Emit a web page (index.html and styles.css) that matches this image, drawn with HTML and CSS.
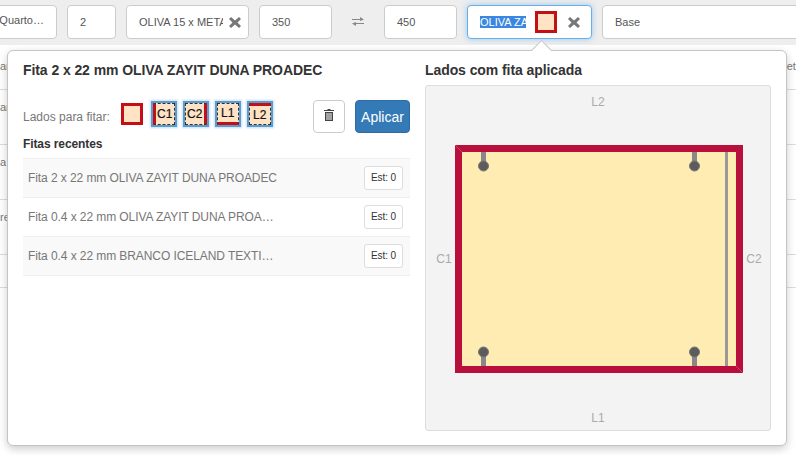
FILE: index.html
```html
<!DOCTYPE html>
<html lang="pt">
<head>
  <meta charset="UTF-8" />
  <meta name="viewport" content="width=device-width, initial-scale=1.0" />
  <title>Fitas</title>
  <link rel="stylesheet" href="styles.css">
</head>
<body>
  <div class="toolbar">
    <div class="field f-name"><span class="clip">Quarto…</span></div>
    <div class="field f-qty"><span>2</span></div>
    <div class="field f-mat">
      <span class="clip">OLIVA 15 x METAL</span>
      <svg class="remove" width="12" height="11" viewBox="0 0 12 11"><path d="M2 0l4 3.500L10 0l2 2-3.500 3.500L12 9l-2 2-4-3.500L2 11 0 9l3.500-3.500L0 2z"/></svg>
    </div>
    <div class="field f-num"><span>350</span></div>
    <div class="swap">
      <svg width="12" height="9" viewBox="0 0 12 9"><path d="M8 0l4 2.500L8 4V3H0V2h8zM4 5v1h8v1H4v2L0 6.500z" fill="#888"/></svg>
    </div>
    <div class="field f-num"><span>450</span></div>
    <div class="field f-tape active">
      <span class="clip"><span class="selected">OLIVA ZAYIT</span></span>
      <span class="swatch"></span>
      <svg class="remove" width="12" height="11" viewBox="0 0 12 11"><path d="M2 0l4 3.500L10 0l2 2-3.500 3.500L12 9l-2 2-4-3.500L2 11 0 9l3.500-3.500L0 2z"/></svg>
    </div>
    <div class="field f-base"><span>Base</span></div>
  </div>

  <div class="rows">
    <div class="row row-first"><span>ar</span><span>eta</span></div>
    <div class="row"><span>ar</span></div>
    <div class="row"><span>a</span></div>
    <div class="row"><span>re</span></div>
    <div class="row row-last"></div>
  </div>

  <div class="popover">
    <div class="arrow"></div>
    <div class="col-left">
      <h3>Fita 2 x 22 mm OLIVA ZAYIT DUNA PROADEC</h3>
      <div class="sides">
        <span class="sides-label">Lados para fitar:</span>
        <span class="swatch"></span>
        <span class="side s-c1">C1</span>
        <span class="side s-c2">C2</span>
        <span class="side s-l1">L1</span>
        <span class="side s-l2">L2</span>
        <button class="btn-trash">
          <svg width="10" height="12" viewBox="0 0 10 12"><path d="M3.500 0h3v1H10v1H0V1h3.500zM1 3h8v9H1zM2.500 4v7h1V4zM4.500 4v7h1V4zM6.500 4v7h1V4z" fill="#444" fill-rule="evenodd"/></svg>
        </button>
        <button class="btn-apply">Aplicar</button>
      </div>
      <h4>Fitas recentes</h4>
      <ul class="recent">
        <li><span class="clip">Fita 2 x 22 mm OLIVA ZAYIT DUNA PROADEC</span><span class="est">Est: 0</span></li>
        <li><span class="clip">Fita 0.4 x 22 mm OLIVA ZAYIT DUNA PROA…</span><span class="est">Est: 0</span></li>
        <li><span class="clip">Fita 0.4 x 22 mm BRANCO ICELAND TEXTI…</span><span class="est">Est: 0</span></li>
      </ul>
    </div>
    <div class="col-right">
      <h3>Lados com fita aplicada</h3>
      <div class="preview">
        <div class="label-top">L2</div>
        <div class="preview-mid">
          <span class="side-label">C1</span>
          <svg class="piece" width="288" height="228" viewBox="0 0 288 228">
            <rect x="7" y="7" width="274" height="214" fill="#ffecb3"/>
            <g fill="#b80f3c">
              <polygon points="0,0 288,0 288,228 281,221 281,7 7,7"/>
              <polygon points="288,228 0,228 0,0 7,7 7,221 281,221"/>
            </g>
            <rect x="270" y="7" width="3" height="214" fill="#999"/>
            <g fill="#888">
              <rect x="26" y="7" width="5" height="14"/>
              <rect x="237" y="7" width="5" height="14"/>
              <rect x="26" y="207" width="5" height="14"/>
              <rect x="237" y="207" width="5" height="14"/>
            </g>
            <g fill="#5c5c5c" stroke="#777" stroke-width="1">
              <circle cx="28.500" cy="21" r="5"/>
              <circle cx="239.500" cy="21" r="5"/>
              <circle cx="28.500" cy="207" r="5"/>
              <circle cx="239.500" cy="207" r="5"/>
            </g>
          </svg>
          <span class="side-label">C2</span>
        </div>
        <div class="label-bottom">L1</div>
      </div>
    </div>
  </div>
</body>
</html>
```

FILE: styles.css
```css
* { box-sizing: border-box; }
html, body { height: 100%; }
body { margin: 0; overflow: hidden; background: #fff; color: #333; font-family: "Liberation Sans", Arial, sans-serif; font-size: 11px; position: relative; }

.toolbar { display: flex; align-items: flex-start; gap: 10px; height: 45px; padding-top: 5px; background: #eee; margin-left: -59px; }
.field { flex: none; display: flex; align-items: center; height: 34px; padding: 0 12px; background: #fff; border: 1px solid #ccc; border-radius: 4px; color: #555; }
.clip { flex: 1; min-width: 0; overflow: hidden; white-space: nowrap; }
.f-name { width: 116px; justify-content: flex-end; padding: 0 12px 4px 0; }
.f-name .clip { flex: none; }
.f-qty { width: 49px; }
.f-mat { width: 123px; padding-right: 7px; gap: 6px; }
.f-num { width: 73px; }
.f-tape { width: 125px; padding-right: 11px; }
.f-base { width: 300px; }
.swap { flex: none; display: flex; justify-content: center; width: 32px; padding-top: 12px; }
.remove { flex: none; fill: #777; }
.active { border-color: #66afe9; box-shadow: 0 0 6px rgba(102, 175, 233, .6); }
.selected { background: #3a86e0; color: #fff; }
.f-tape .swatch { margin: 0 11px 0 9px; }

.swatch { display: block; flex: none; width: 22px; height: 22px; background: #ffe3c4; border: 3px solid #c40f14; }

.row { display: flex; justify-content: space-between; height: 55px; padding-top: 11px; margin-right: -6px; border-bottom: 1px solid #ddd; color: #777; }
.row-first { height: 45px; padding-top: 15px; }
.row-last { height: 33px; }

.popover { position: absolute; left: 7px; top: 50px; width: 780px; height: 396px; display: flex; gap: 15px; padding: 11px 15px 15px; background: #fff; border: 1px solid #c4c4c4; border-radius: 6px; box-shadow: 0 3px 8px rgba(0, 0, 0, .2); }
.arrow { position: absolute; left: 526px; top: -8px; width: 15px; height: 15px; background: #fff; border-left: 1px solid #c4c4c4; border-top: 1px solid #c4c4c4; transform: rotate(45deg); }

.col-left { width: 387px; }
.col-right { flex: 1; }
h3 { margin: 0; font-size: 14px; font-weight: bold; line-height: 17px; letter-spacing: -.08px; color: #333; }
h4 { margin: 4px 0 0; font-size: 12px; font-weight: bold; line-height: 14px; letter-spacing: -.1px; color: #333; }

.sides { display: flex; align-items: center; gap: 10px; margin-top: 21px; height: 33px; }
.sides-label { margin-right: 1px; color: #777; font-size: 12px; }
.sides .swatch, .side { margin-bottom: 5px; }
.side { flex: none; display: flex; align-items: center; justify-content: center; width: 22px; height: 22px; background: #ffe3c4; border: 1px dashed #333; box-shadow: 0 0 0 2px #5a9bd0, 0 0 2px 3px rgba(102, 175, 233, .4); color: #111; font-size: 12px; -webkit-text-stroke: .2px #111; }
.s-c1 { border-left: 3px solid #c40f14; }
.s-c2 { border-right: 3px solid #c40f14; }
.s-l1 { border-bottom: 3px solid #c40f14; }
.s-l2 { border-top: 3px solid #c40f14; }

button { font-family: inherit; cursor: pointer; }
.btn-trash { flex: none; width: 32px; height: 33px; margin-left: auto; padding: 0; background: #fff; border: 1px solid #ccc; border-radius: 4px; }
.btn-apply { flex: none; width: 55px; height: 33px; padding: 0; background: #337ab7; border: 1px solid #2e6da4; border-radius: 4px; color: #fff; font-size: 14px; }

.recent { list-style: none; margin: 7px 0 0; padding: 0; border-top: 1px solid #eee; }
.recent li { display: flex; align-items: center; justify-content: space-between; height: 39px; padding: 0 7px 0 5px; border-bottom: 1px solid #eee; color: #777; font-size: 12px; letter-spacing: -.08px; }
.recent li:nth-child(odd) { background: #f9f9f9; }
.est { flex: none; width: 39px; height: 24px; margin-left: 10px; line-height: 22px; text-align: center; background: #fff; border: 1px solid #ddd; border-radius: 3px; color: #333; font-size: 10px; }

.preview { display: flex; flex-direction: column; height: 346px; margin-top: 6px; background: #f3f3f3; border: 1px solid #ddd; border-radius: 3px; color: #aaa; font-size: 12px; text-align: center; }
.label-top { height: 59px; padding-top: 9px; }
.label-bottom { padding-top: 38px; }
.preview-mid { display: flex; align-items: center; justify-content: center; gap: 3px; padding-left: 2px; }
.side-label { width: 16px; }
.piece { display: block; flex: none; }
```
